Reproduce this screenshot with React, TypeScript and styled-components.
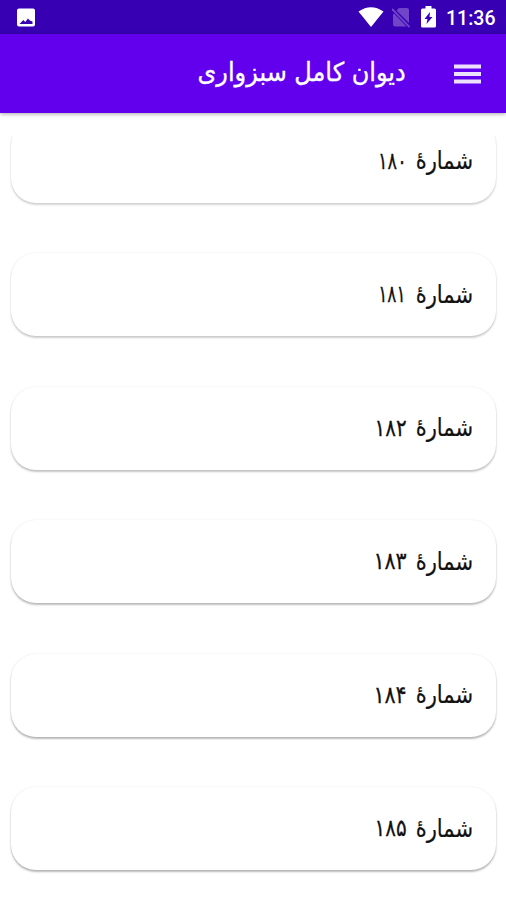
import React from "react";
import styled, { createGlobalStyle } from "styled-components";

const Global = createGlobalStyle`
  body { margin: 0; background: #fff; overflow: hidden; }
  * { box-sizing: border-box; }
`;
const Screen = styled.div`
  height: 900px; width: 506px; overflow: hidden; display: flex; flex-direction: column; background: #fff;
`;
const Status = styled.div`
  height: 34px; flex: none; background: #3700b3; display: flex; align-items: center; padding: 0 10px 0 16px; color: #fff;
`;
const PhotoIcon = styled.svg`
  margin-top: 1px;
`;
const StatusRight = styled.div`
  margin-left: auto; display: flex; align-items: center; height: 34px;
`;
const WifiIcon = styled.svg`
  margin-right: 8px;
`;
const SimIcon = styled.svg`
  margin-right: 11px;
`;
const Clock = styled.span`
  font: 500 19.5px Roboto, sans-serif; width: 50px; margin-left: 10px; white-space: nowrap; line-height: 34px; padding-top: 3px;
`;
const Bar = styled.header`
  height: 79px; flex: none; background: #6200ee; display: flex; align-items: center; direction: rtl; padding: 0 25px;
  box-shadow: 0 1px 4px rgba(0,0,0,.35);
`;
const Title = styled.h1`
  margin: 0 48px 3px 0; color: #fff; font: 400 26px "DejaVu Sans", sans-serif; white-space: nowrap;
  transform: scaleX(.922); transform-origin: right center; -webkit-text-stroke: .35px #fff;
`;
const List = styled.main`
  margin-top: 23px; overflow: hidden; flex: 1; direction: rtl; padding: 0 10px 0 11px;
`;
const Stack = styled.div`
  margin-top: -16.5px; display: flex; flex-direction: column; gap: 50.6px;
`;
const Card = styled.article<{ $shade: number }>`
  height: 83px; flex: none; border-radius: 25px; background: #fff; padding: 0 23px 1px; display: flex; align-items: center;
  box-shadow: 0 2px 2px rgba(0,0,0,${(p) => p.$shade}), 0 0 2px rgba(0,0,0,.1);
`;
const Word = styled.span`
  width: 57px; flex: none; font: 25px "DejaVu Sans", sans-serif; color: #111; white-space: nowrap;
  transform: scaleX(.84); transform-origin: right center; -webkit-text-stroke: .2px #111;
`;
const Digits = styled.span<{ $scale: number; $gap: number }>`
  margin-right: ${(p) => p.$gap}px; font: 24px "DejaVu Sans", sans-serif; color: #111; white-space: nowrap;
  transform: scaleX(${(p) => p.$scale}); transform-origin: right center; -webkit-text-stroke: .3px #111;
`;

const items = [
  { n: "۱۸۰", scale: 0.74, gap: 9, shade: 0.16 },
  { n: "۱۸۱", scale: 0.71, gap: 10, shade: 0.19 },
  { n: "۱۸۲", scale: 0.83, gap: 9, shade: 0.22 },
  { n: "۱۸۳", scale: 0.86, gap: 9, shade: 0.25 },
  { n: "۱۸۴", scale: 0.86, gap: 9, shade: 0.27 },
  { n: "۱۸۵", scale: 0.83, gap: 9, shade: 0.27 },
];

export default function App() {
  return (
    <Screen>
      <Global />
      <Status>
        <PhotoIcon width="20" height="20" viewBox="0 0 20 20"><path fill="#fff" fillRule="evenodd" d="M3 .5h14a2 2 0 0 1 2 2v14a2 2 0 0 1-2 2H3a2 2 0 0 1-2-2v-14a2 2 0 0 1 2-2zM3.500 16h13v-2.500L13.800 12.500 12 10.500 9.300 14 7.300 12z" /></PhotoIcon>
        <StatusRight>
          <WifiIcon width="26" height="20" viewBox="0 0 26 20"><path fill="#fff" d="M.5 4.500Q13-4 25.500 4.500L13 20z" /></WifiIcon>
          <SimIcon width="18" height="21" viewBox="0 0 18 21">
            <path fill="#7045c8" d="M7 1h8q2 0 2 2v13L4.500 3.500zM2 6.500l12.500 13H3q-2 0-2-2V7.500z" />
            <path fill="none" stroke="#7045c8" strokeWidth="1.800" d="M0 2l17.500 18" />
          </SimIcon>
          <svg width="15" height="22" viewBox="0 0 15 22"><path fill="#fff" fillRule="evenodd" d="M4.500 0h6v2.500h3q1.500 0 1.500 1.500v16q0 1.500-1.500 1.500h-12Q0 21.500 0 20V4q0-1.500 1.500-1.500h3zM9 6l-5.500 7h3L5.500 18l6-7H8.500z" /></svg>
          <Clock>11:36</Clock>
        </StatusRight>
      </Status>
      <Bar>
        <svg width="27" height="20" viewBox="0 0 27 20"><path fill="#fff" fillOpacity=".88" d="M0 .5h27V4.500H0zM0 8h27v4H0zM0 15.500h27v4H0z" /></svg>
        <Title>دیوان کامل سبزواری</Title>
      </Bar>
      <List>
        <Stack>
          {items.map((i) => (
            <Card key={i.n} $shade={i.shade}>
              <Word>شمارهٔ</Word>
              <Digits $scale={i.scale} $gap={i.gap}>{i.n}</Digits>
            </Card>
          ))}
        </Stack>
      </List>
    </Screen>
  );
}
